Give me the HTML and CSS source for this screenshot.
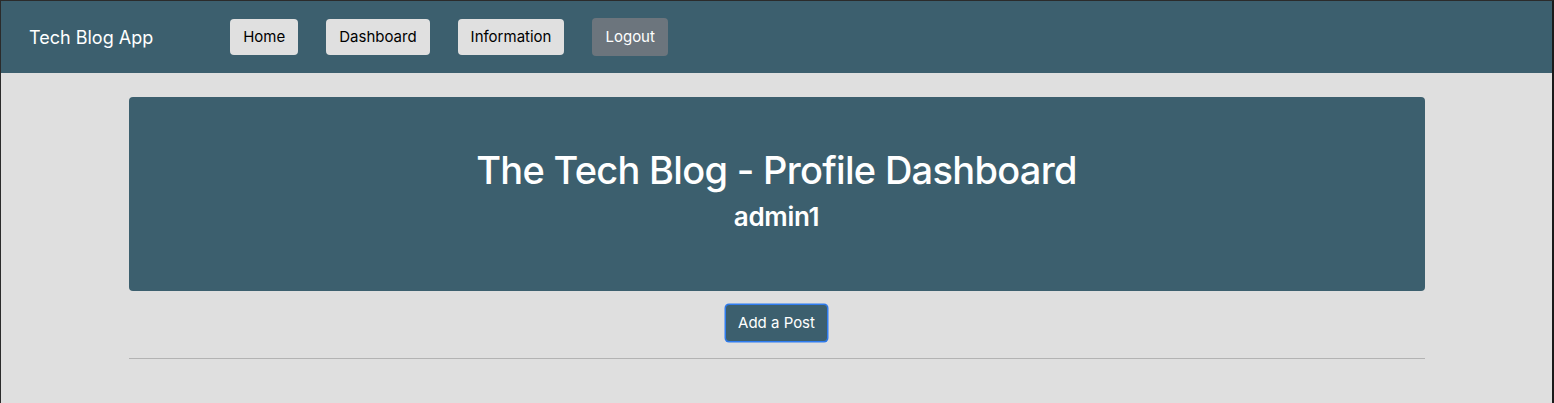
FILE: index.html
```html
<!DOCTYPE html>
<html lang="en">
<head>
<meta charset="utf-8">
<title>Tech Blog App</title>
<link rel="stylesheet" href="styles.css">
</head>
<body>
<header class="navbar">
  <a class="brand" href="#">Tech Blog App</a>
  <nav class="nav-links">
    <a class="btn btn-light" href="#">Home</a>
    <a class="btn btn-light" href="#">Dashboard</a>
    <a class="btn btn-light" href="#">Information</a>
    <a class="btn btn-secondary" href="#">Logout</a>
  </nav>
</header>
<main class="container">
  <section class="jumbotron">
    <h1 class="title">The Tech Blog - Profile Dashboard</h1>
    <h2 class="username">admin1</h2>
  </section>
  <div class="actions">
    <button class="btn btn-primary" type="button">Add a Post</button>
  </div>
  <hr class="divider">
</main>
</body>
</html>
```
FILE: styles.css
```css
* { box-sizing: border-box; }
html, body { height: 100%; }
body {
  margin: 0;
  background: #dfdfdf;
  font-family: Inter, "Liberation Sans", Arial, sans-serif;
  color: #212529;
  border-top: 1px solid #2b2b2b;
  border-left: 1px solid #2b2b2b;
  border-right: 2px solid #1a1a1a;
}
.navbar {
  height: 72px;
  background: #3c5f6e;
  display: flex;
  align-items: center;
  padding: 0 0 0 28px;
}
.brand {
  color: #fff;
  text-decoration: none;
  font-size: 18px;
  margin-right: 77px;
}
.nav-links {
  display: flex;
  gap: 28px;
  align-items: center;
}
.btn {
  display: inline-block;
  font-family: inherit;
  font-size: 15px;
  line-height: 20px;
  padding: 7px 12px;
  border-radius: 4px;
  text-decoration: none;
  border: 1px solid transparent;
  cursor: pointer;
}
.btn-light { background: #e0e0e0; color: #000; }
.btn-secondary { background: #6c757d; color: #fff; padding: 8px 12px; }
.container {
  width: 1296px;
  margin: 0 auto;
  padding-top: 24px;
}
.jumbotron {
  background: #3c5f6e;
  border-radius: 4px;
  height: 194px;
  color: #fff;
  text-align: center;
  padding-top: 49px;
}
.title {
  margin: 0;
  font-size: 38px;
  font-weight: 500;
  line-height: 48px;
  letter-spacing: -0.7px;
}
.username {
  margin: 7px 0 0;
  font-size: 26px;
  font-weight: 600;
  line-height: 32px;
  letter-spacing: -0.3px;
}
.actions {
  display: flex;
  justify-content: center;
  padding-top: 13px;
}
.btn-primary {
  background: #3c5f6e;
  color: #fff;
  border: 1px solid #2f7cf0;
  box-shadow: 0 0 0 0.5px #2f7cf0;
  padding: 8px 12px;
  font-size: 15px;
}
.divider {
  margin: 16px 0 0;
  border: 0;
  border-top: 1px solid #b3b3b3;
}
```
